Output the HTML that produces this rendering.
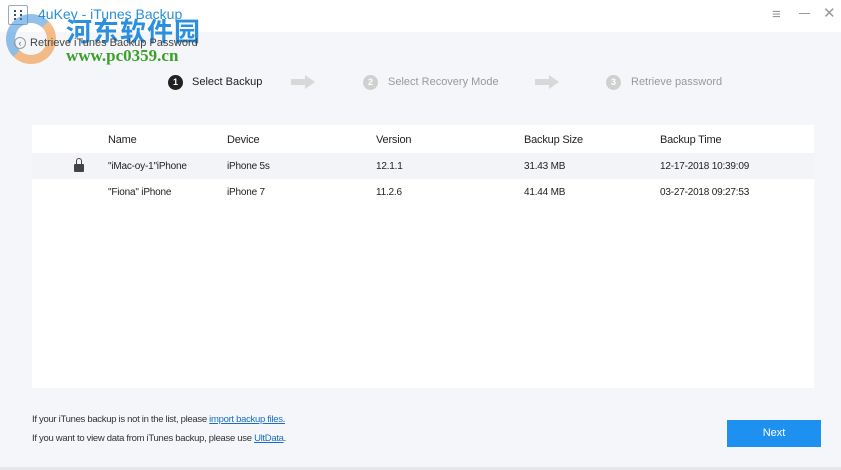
<!DOCTYPE html>
<html><head><meta charset="utf-8"><style>
*{margin:0;padding:0;box-sizing:border-box}
body{width:841px;height:470px;background:#f5f6f9;font-family:"Liberation Sans","Noto Sans CJK SC",sans-serif;position:relative;overflow:hidden;color:#333}
.top{position:absolute;left:0;top:0;width:841px;height:32px;background:#fff}
.abs{position:absolute;white-space:nowrap}
.step{font-size:11px;color:#999}
.circ{position:absolute;width:15px;height:15px;border-radius:50%;background:#d0d0d0;color:#fff;font-size:9px;text-align:center;line-height:15px;font-weight:bold}
.arrow{position:absolute;width:24px;height:14px}
.table{position:absolute;left:32px;top:125px;width:782px;height:263px;background:#fff}
.row{position:absolute;left:0;width:782px;font-size:10px;color:#222;letter-spacing:-0.2px}
.row span{position:absolute;top:0}
a{color:#1a6fc2;text-decoration:underline}
</style></head><body>
<div class="top"></div>
<div class="abs" style="left:8px;top:5px;width:20px;height:20px;border:1px solid #9ab;border-radius:2px"></div>
<div class="abs" style="left:14px;top:10px;width:8px;height:10px;border-left:2px dotted #357;border-right:2px dotted #357"></div>
<div class="abs" style="left:38px;top:6px;font-size:14px;color:#2a8fd8">4uKey - iTunes Backup</div>
<div class="abs" style="left:6px;top:14px;width:50px;height:50px;border-radius:50%;border:9px solid #3a8fd8;border-right-color:#f08a2a;border-bottom-color:#f08a2a;opacity:.55"></div>
<div class="abs" style="left:66px;top:12px;font-size:26px;font-weight:bold;color:#2a8fe0;font-family:'Noto Sans CJK SC',sans-serif;letter-spacing:1px">河东软件园</div>
<div class="abs" style="left:14px;top:37px;width:12px;height:12px;border:1px solid #999;border-radius:50%;font-size:9px;line-height:10px;text-align:center;color:#666">‹</div>
<div class="abs" style="left:30px;top:37px;font-size:11px;color:#444">Retrieve iTunes Backup Password</div>
<div class="abs" style="left:66px;top:46px;font-size:17px;font-weight:bold;color:#3aa02a;font-family:'Liberation Serif',serif">www.pc0359.cn</div>
<div class="abs" style="left:772px;top:6px;font-size:15px;color:#999">≡</div>
<div class="abs" style="left:799px;top:13px;width:11px;height:1px;background:#999"></div>
<div class="abs" style="left:823px;top:4px;font-size:15px;color:#999">✕</div>

<div class="circ" style="left:168px;top:75px;background:#222">1</div>
<div class="abs step" style="left:192px;top:76px;color:#222">Select Backup</div>
<svg class="arrow" style="left:291px;top:75px" viewBox="0 0 24 14"><path d="M0 4h14V0l10 7-10 7v-4H0z" fill="#d8d8d8"/></svg>
<div class="circ" style="left:363px;top:75px">2</div>
<div class="abs step" style="left:388px;top:76px">Select Recovery Mode</div>
<svg class="arrow" style="left:535px;top:75px" viewBox="0 0 24 14"><path d="M0 4h14V0l10 7-10 7v-4H0z" fill="#d8d8d8"/></svg>
<div class="circ" style="left:606px;top:75px">3</div>
<div class="abs step" style="left:631px;top:76px">Retrieve password</div>

<div class="table">
<div class="row" style="top:0;height:28px;font-size:11px"><span style="left:76px;top:9px">Name</span><span style="left:195px;top:9px">Device</span><span style="left:344px;top:9px">Version</span><span style="left:492px;top:9px">Backup Size</span><span style="left:628px;top:9px">Backup Time</span></div>
<div class="row" style="top:28px;height:26px;background:#f3f4f7"><span style="left:42px;width:10px;height:8px;background:#444;border-radius:1px;top:11px"></span><span style="left:44px;top:5px;width:6px;height:7px;border:1.5px solid #444;border-bottom:none;border-radius:3px 3px 0 0"></span><span style="left:76px;top:8px">"iMac-oy-1"iPhone</span><span style="left:195px;top:8px">iPhone 5s</span><span style="left:344px;top:8px">12.1.1</span><span style="left:492px;top:8px">31.43 MB</span><span style="left:628px;top:8px">12-17-2018 10:39:09</span></div>
<div class="row" style="top:54px;height:26px"><span style="left:76px;top:8px">"Fiona" iPhone</span><span style="left:195px;top:8px">iPhone 7</span><span style="left:344px;top:8px">11.2.6</span><span style="left:492px;top:8px">41.44 MB</span><span style="left:628px;top:8px">03-27-2018 09:27:53</span></div>
</div>

<div class="abs" style="left:32px;top:414px;font-size:9.5px;letter-spacing:-0.3px;color:#333">If your iTunes backup is not in the list, please <a>import backup files.</a></div>
<div class="abs" style="left:32px;top:433px;font-size:9.5px;letter-spacing:-0.3px;color:#333">If you want to view data from iTunes backup, please use <a>UltData</a>.</div>
<div class="abs" style="left:727px;top:420px;width:94px;height:27px;background:#1e90ef;color:#fff;font-size:11px;text-align:center;line-height:27px">Next</div>
<div class="abs" style="left:0;top:467px;width:841px;height:3px;background:#e6e7ea"></div>
</body></html>
